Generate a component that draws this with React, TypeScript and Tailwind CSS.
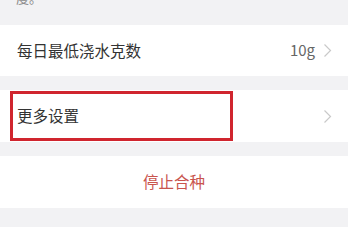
import React from 'react';

const font = { fontFamily: '"Noto Sans CJK SC", "Liberation Sans", sans-serif' };

function Chevron() {
  return (
    <svg width="9" height="15" viewBox="0 0 9 15" className="shrink-0">
      <path d="M1.5 1.5 L7.5 7.5 L1.5 13.5" fill="none" stroke="#c9c9c9" strokeWidth="1.2" />
    </svg>
  );
}

export default function App() {
  return (
    <div className="w-[348px] h-[227px] bg-[#f2f2f4] overflow-hidden flex flex-col" style={font}>
      {/* cut-off description */}
      <div className="h-[25px] overflow-hidden px-4">
        <div className="mt-[-12px] text-[13px] leading-[20px] text-[#8a8a8a]">度。</div>
      </div>

      <div className="h-[51px] bg-white flex items-center pl-[17px] pr-[16px]">
        <span className="flex-1 text-[15.5px] text-[#333]">每日最低浇水克数</span>
        <span className="text-[15px] text-[#666] mr-[8px]">10g</span>
        <Chevron />
      </div>

      <div className="h-[14px]" />

      <div className="relative h-[52px] bg-white flex items-center pl-[17px] pr-[16px]">
        <span className="flex-1 text-[15.5px] text-[#333]">更多设置</span>
        <Chevron />
        <div className="absolute left-[10px] top-[1px] w-[223px] h-[50px] border-[3px] border-[#d0252e]" />
      </div>

      <div className="h-[14px]" />

      <div className="h-[52px] bg-white flex items-center justify-center">
        <span className="text-[15.5px] text-[#c9544d]">停止合种</span>
      </div>
    </div>
  );
}
